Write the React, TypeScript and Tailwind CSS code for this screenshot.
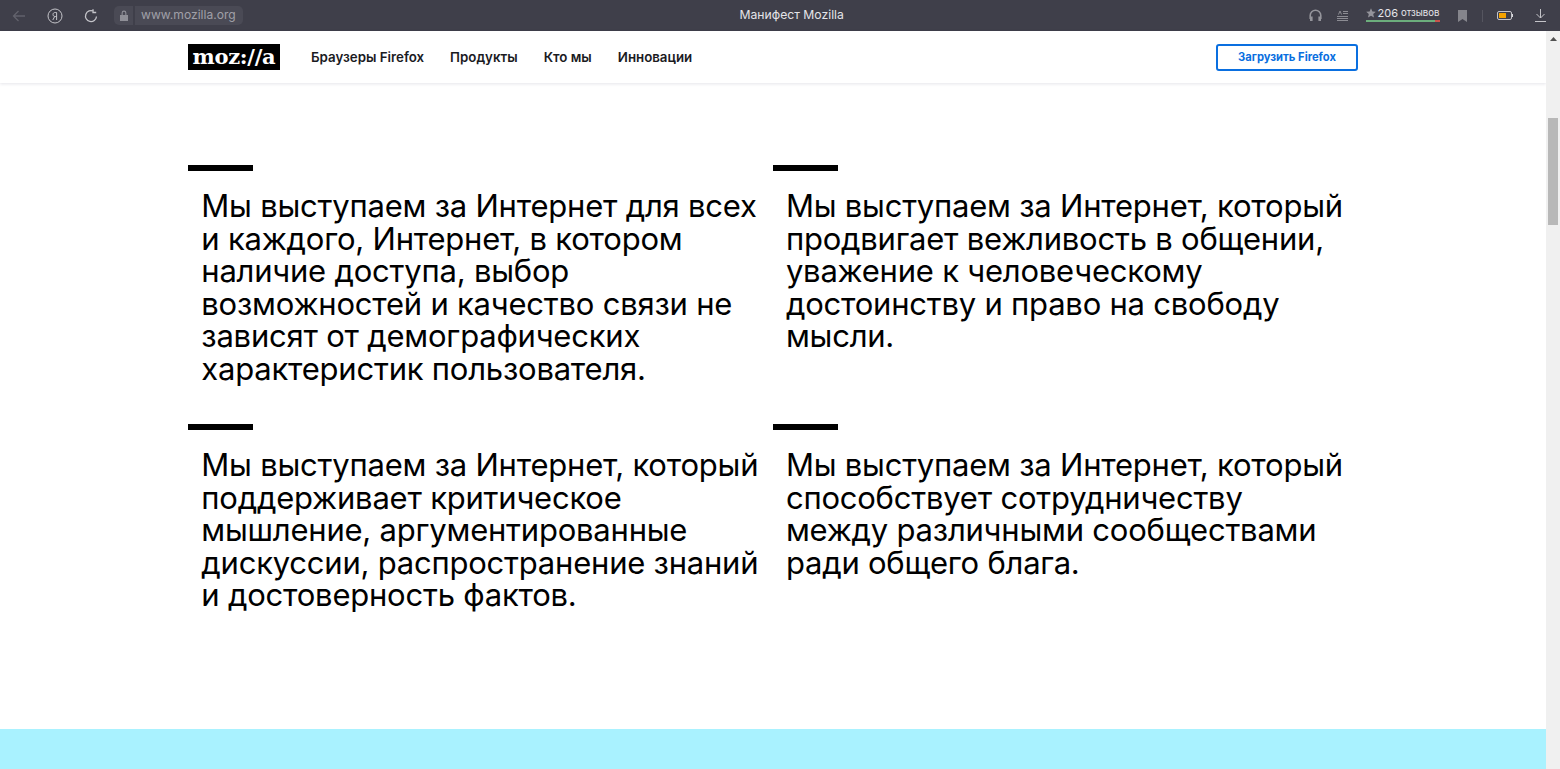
import React from "react";

const sections = [
  [
    ["Мы выступаем за Интернет для всех", "и каждого, Интернет, в котором", "наличие доступа, выбор", "возможностей и качество связи не", "зависят от демографических", "характеристик пользователя."],
    ["Мы выступаем за Интернет, который", "продвигает вежливость в общении,", "уважение к человеческому", "достоинству и право на свободу", "мысли."],
  ],
  [
    ["Мы выступаем за Интернет, который", "поддерживает критическое", "мышление, аргументированные", "дискуссии, распространение знаний", "и достоверность фактов."],
    ["Мы выступаем за Интернет, который", "способствует сотрудничеству", "между различными сообществами", "ради общего блага."],
  ],
];

function Block({ lines }: { lines: string[] }) {
  return (
    <div className="w-[584.6px]">
      <div className="h-[6px] w-[65px] bg-black" />
      <div className="pl-[13px] pt-[19px] text-[31px] leading-[32.5px] font-normal tracking-[-0.22px] text-black whitespace-nowrap">
        {lines.map((l) => (
          <div key={l}>{l}</div>
        ))}
      </div>
    </div>
  );
}

function TopBar() {
  return (
    <div className="flex h-[31px] items-center bg-[#3f3f4a] text-[#c9c9cf] font-['Inter',sans-serif]">
      <svg className="ml-[12px] h-[14px] w-[14px]" viewBox="0 0 14 14" fill="none" stroke="#62626c" strokeWidth="1.3">
        <path d="M13 7H1.5M6.5 2 1.5 7l5 5" />
      </svg>
      <svg className="ml-[21px] h-[16px] w-[16px]" viewBox="0 0 16 16" fill="none" stroke="#c4c4c9" strokeWidth="1">
        <circle cx="8" cy="8" r="7" />
        <path d="M9.6 12V4.5H8.2C6.8 4.5 6 5.3 6 6.5S6.8 8.5 8.2 8.5H9.6M7.7 8.5 5.8 12" />
      </svg>
      <svg className="ml-[21px] h-[14px] w-[14px]" viewBox="0 0 14 14" fill="none" stroke="#c4c4c9" strokeWidth="1.3">
        <path d="M9.6 2.2A5.5 5.5 0 1 0 12.5 7.5M9 .3v3.2h3.2" />
      </svg>
      <div className="ml-[16px] flex h-[19px] w-[19px] items-center justify-center rounded-l-[5px] bg-[#4a4a55]">
        <svg className="h-[11px] w-[10px]" viewBox="0 0 10 11" fill="#8f8f97">
          <path d="M1 5h8v6H1zM2.6 5V3a2.4 2.4 0 0 1 4.8 0v2H6.3V3a1.3 1.3 0 0 0-2.6 0v2z" />
        </svg>
      </div>
      <div className="ml-[2px] flex h-[19px] items-center rounded-r-[5px] bg-[#4a4a55] pl-[6px] pr-[7px] text-[12.1px] text-[#a0a0a8]">www.mozilla.org</div>
      <div className="ml-[495px] w-[108px] text-center text-[12.2px] text-[#e4e4e8] whitespace-nowrap">Манифест Mozilla</div>
      <div className="flex-1" />
      <svg className="h-[13px] w-[13px]" viewBox="0 0 13 13" fill="none" stroke="#94949b" strokeWidth="1.6">
        <path d="M1.2 10V6.5a5.3 5.3 0 0 1 10.6 0V10" />
        <rect x="1" y="7.5" width="2.6" height="4.5" fill="#94949b" stroke="none" />
        <rect x="9.4" y="7.5" width="2.6" height="4.5" fill="#94949b" stroke="none" />
      </svg>
      <svg className="ml-[15px] h-[12px] w-[11px]" viewBox="0 0 11 12" fill="none" stroke="#8c8c93" strokeWidth="1">
        <path d="M3 1 1.5 4.5M3 1l1.5 3.5M6 1.5h5M6 3.5h5M0 6.5h11M0 8.5h11M0 10.5h11" />
      </svg>
      <div className="ml-[17.5px] mb-[3px] flex h-[16px] w-[74px] flex-col items-center justify-end">
        <div className="flex items-center text-[11px] leading-[14px] text-[#e4e4e8] whitespace-nowrap">
          <svg className="mr-[2px] h-[10px] w-[10px]" viewBox="0 0 10 10" fill="#94949b">
            <path d="M5 .3 6.4 3.5 9.8 3.8 7.2 6.1 8 9.6 5 7.8 2 9.6 2.8 6.1.2 3.8 3.6 3.5z" />
          </svg>
          <span>206</span>
          <span className="ml-[3px] text-[9.6px]">отзывов</span>
        </div>
        <div className="flex h-[2px] w-[74px] shrink-0">
          <div className="h-full w-[69px] bg-[#6cae7c]" />
          <div className="h-full w-[5px] bg-[#c9524a]" />
        </div>
      </div>
      <svg className="ml-[18px] h-[12px] w-[9px]" viewBox="0 0 9 12" fill="#85858c">
        <path d="M0 0h9v12L4.5 9 0 12z" />
      </svg>
      <div className="ml-[15px] h-[12px] w-px bg-[#55555f]" />
      <div className="ml-[14px] flex h-[9px] w-[15px] items-center rounded-[2px] border border-[#c4c4c9] p-px">
        <div className="h-full w-[7px] bg-[#f5a300]" />
      </div>
      <div className="h-[3px] w-[1.5px] bg-[#d8d8dc]" />
      <svg className="ml-[22px] mr-[14px] h-[13px] w-[11px]" viewBox="0 0 11 13" fill="none" stroke="#c4c4c9" strokeWidth="1">
        <path d="M5.5 0v9M1.5 5l4 4 4-4M0 12.5h11" />
      </svg>
    </div>
  );
}

export default function App() {
  return (
    <div className="flex h-[769px] w-[1560px] flex-col overflow-hidden bg-white font-['Inter',sans-serif]">
      <TopBar />
      <div className="flex min-h-0 flex-1">
        <div className="flex min-w-0 flex-1 flex-col">
          <header className="flex h-[52px] items-center bg-white pl-[188px] pr-[188px] shadow-[0_1px_3px_rgba(40,40,80,0.12)]">
            <div className="flex h-[26px] w-[92px] items-center justify-center bg-black pb-[2px] font-['DejaVu_Serif',serif] text-[21px] font-bold leading-none tracking-[-0.3px] text-white">moz://a</div>
            <nav className="ml-[31px] flex gap-[26px] pt-[1px] text-[13.3px] font-semibold text-[#1b1b1f]">
              <span>Браузеры Firefox</span>
              <span>Продукты</span>
              <span>Кто мы</span>
              <span>Инновации</span>
            </nav>
            <div className="flex-1" />
            <button className="flex h-[27px] w-[142px] items-center justify-center rounded-[3px] border-2 border-[#0a6fe0] pt-[1px] text-[11.2px] font-bold text-[#0a6fe0]">Загрузить Firefox</button>
          </header>
          <main className="flex flex-1 flex-col pl-[188.3px] pt-[82px]">
            <div className="flex h-[259px]">
              <Block lines={sections[0][0]} />
              <Block lines={sections[0][1]} />
            </div>
            <div className="flex">
              <Block lines={sections[1][0]} />
              <Block lines={sections[1][1]} />
            </div>
          </main>
          <div className="h-[40px] bg-[#a9f2ff]" />
        </div>
        <div className="flex w-[14px] flex-col bg-[#f0f0f0]">
          <svg className="mx-auto mt-[6px] h-[4px] w-[7px]" viewBox="0 0 7 4" fill="#505050"><path d="M3.5 0 7 4H0z" /></svg>
          <div className="mx-auto mt-[77px] h-[107px] w-[10px] bg-[#b8b8b8]" />
        </div>
      </div>
    </div>
  );
}
